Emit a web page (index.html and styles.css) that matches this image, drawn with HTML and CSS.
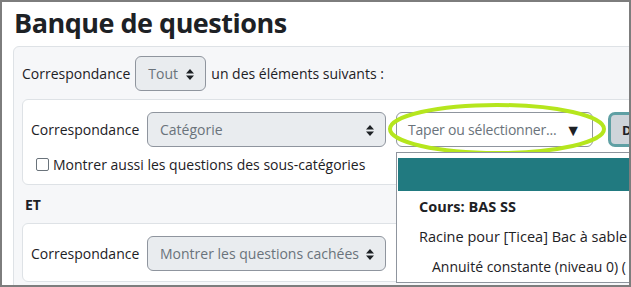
FILE: index.html
```html
<!DOCTYPE html>
<html lang="fr">
<head>
  <meta charset="UTF-8">
  <title>Banque de questions</title>
  <link rel="stylesheet" href="styles.css">
</head>
<body>
  <div id="page">
    <h2 class="page-title">Banque de questions</h2>

    <div class="filters">
      <div class="join-row">
        <span>Correspondance</span>
        <div class="select select-small">Tout
          <svg class="caret" width="8" height="11" viewBox="0 0 8 11"><path d="M4 0 L8 4.5 H0 Z M0 6.5 H8 L4 11 Z" fill="#1d2125"/></svg>
        </div>
        <span>un des éléments suivants :</span>
      </div>

      <div class="condition">
        <div class="cond-row">
          <span class="label">Correspondance</span>
          <div class="select">Catégorie
            <svg class="caret" width="8" height="11" viewBox="0 0 8 11"><path d="M4 0 L8 4.5 H0 Z M0 6.5 H8 L4 11 Z" fill="#1d2125"/></svg>
          </div>
          <div class="autocomplete">
            <span class="placeholder">Taper ou sélectionner...</span>
            <span class="down">&#9660;</span>
            <ul class="suggestions">
              <li class="active"></li>
              <li class="course">Cours: BAS SS</li>
              <li>Racine pour [Ticea] Bac à sable</li>
              <li class="sub">Annuité constante (niveau 0) (</li>
            </ul>
          </div>
          <button class="apply">D</button>
          <svg class="highlight" width="230" height="60" viewBox="0 0 230 60">
            <ellipse cx="115" cy="30" rx="107" ry="24" fill="none" stroke="#b5e61d" stroke-width="4"/>
          </svg>
        </div>
        <label class="check">
          <span class="box"></span>
          Montrer aussi les questions des sous-catégories
        </label>
      </div>

      <div class="and">ET</div>

      <div class="condition">
        <div class="cond-row">
          <span class="label">Correspondance</span>
          <div class="select">Montrer les questions cachées
            <svg class="caret" width="8" height="11" viewBox="0 0 8 11"><path d="M4 0 L8 4.5 H0 Z M0 6.5 H8 L4 11 Z" fill="#1d2125"/></svg>
          </div>
        </div>
      </div>
    </div>
  </div>
</body>
</html>
```

FILE: styles.css
```css
body {
  margin: 0;
  font-family: "Open Sans", "Noto Sans", sans-serif;
  font-size: 14px;
  color: #1d2125;
  background-color: #fff;
}

#page {
  width: 631px;
  height: 287px;
  box-sizing: border-box;
  border: 2px solid #7d7d7d;
  padding-left: 11px;
  overflow: hidden;
}

.page-title {
  margin: 5px 0 7px 1px;
  font-size: 27px;
  font-weight: 700;
  line-height: 32px;
  letter-spacing: -0.5px;
}

.filters {
  width: 720px;
  background-color: #f6f7f9;
  border: 1px solid #dee2e6;
  border-radius: 6px;
  padding: 8px;
}

.join-row {
  display: flex;
  align-items: center;
  gap: 5px;
  height: 36px;
  margin-bottom: 8px;
}

.select {
  position: relative;
  display: flex;
  align-items: center;
  box-sizing: border-box;
  width: 239px;
  height: 35px;
  padding: 0 12px;
  background-color: #e9ecef;
  border: 1px solid #8f959e;
  border-radius: 6px;
  color: #6a737b;
  font-size: 14px;
  white-space: nowrap;
}

.select .caret {
  position: absolute;
  right: 11px;
  top: 12px;
}

.select-small {
  width: 71px;
}

.condition {
  background-color: #fff;
  border: 1px solid #dee2e6;
  border-radius: 6px;
  padding: 12px 8px 10px 8px;
}

.cond-row {
  position: relative;
  display: flex;
  align-items: center;
  height: 35px;
}

.cond-row .label {
  width: 116px;
}

.autocomplete {
  position: relative;
  display: flex;
  align-items: center;
  box-sizing: border-box;
  width: 197px;
  height: 35px;
  margin-left: 10px;
  padding: 0 11px 0 11px;
  border: 1px solid #8f959e;
  border-radius: 6px;
  color: #6a737b;
  font-size: 14px;
  white-space: nowrap;
}

.autocomplete .placeholder {
  letter-spacing: -0.2px;
}

.autocomplete .down {
  margin-left: auto;
  color: #1d2125;
  font-size: 16px;
}

.suggestions {
  position: absolute;
  top: 39px;
  left: -1px;
  z-index: 2;
  width: 400px;
  margin: 0;
  padding: 5px 0 0 0;
  list-style: none;
  background-color: #fff;
  border: 1px solid #8f959e;
  color: #1d2125;
  font-size: 14.5px;
}

.suggestions li {
  height: 30px;
  line-height: 30px;
  padding-left: 22px;
  white-space: nowrap;
}

.suggestions li.active {
  height: 33px;
  margin-left: 1px;
  background-color: #217a80;
}

.suggestions li.course {
  font-weight: 700;
  margin-top: 1px;
}

.suggestions li.sub {
  padding-left: 35px;
  font-size: 14px;
}

.apply {
  box-sizing: border-box;
  width: 60px;
  height: 35px;
  margin-left: 15px;
  padding: 0 0 0 11px;
  text-align: left;
  background-color: #ced4da;
  border: 3px solid #5fa0a4;
  border-radius: 7px;
  font-family: inherit;
  font-size: 13px;
  font-weight: 700;
  color: #1d2125;
}

.highlight {
  position: absolute;
  left: 351px;
  top: -13px;
}

.check {
  display: flex;
  align-items: center;
  gap: 4px;
  margin-top: 8px;
  padding-left: 5px;
}

.check .box {
  width: 11px;
  height: 11px;
  border: 1px solid #6a737b;
  border-radius: 2px;
}

.and {
  font-weight: 700;
  margin: 10px 0 9px 3px;
}
```
